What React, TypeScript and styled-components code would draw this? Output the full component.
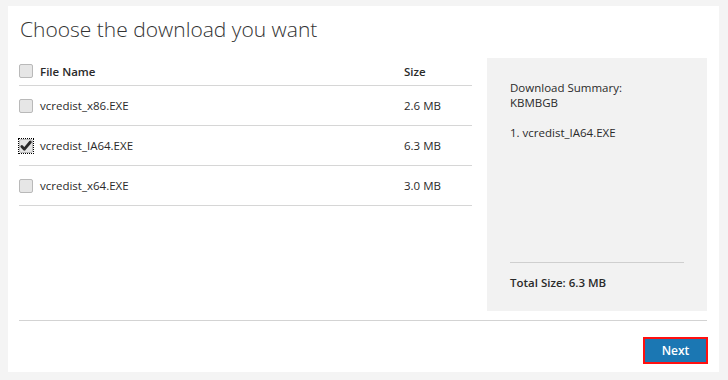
import styled, { createGlobalStyle } from "styled-components";

const files = [
  { name: "vcredist_x86.EXE", size: "2.6 MB", checked: false },
  { name: "vcredist_IA64.EXE", size: "6.3 MB", checked: true },
  { name: "vcredist_x64.EXE", size: "3.0 MB", checked: false },
];

const Check = ({ checked = false, focused = false }) => (
  <CheckFocus $focused={focused}>
    <CheckBox>
      {checked && (
        <svg width="14" height="14" viewBox="0 0 14 14">
          <path
            d="M2.8 7.6 L5.4 10.2 L11.4 3"
            fill="none"
            stroke="#2b2b2b"
            strokeWidth="2.8"
            strokeLinecap="round"
            strokeLinejoin="round"
          />
        </svg>
      )}
    </CheckBox>
  </CheckFocus>
);

const App = () => {
  return (
    <>
      <GlobalStyle />
      <Page>
        <Card>
          <Title>Choose the download you want</Title>
          <Content>
            <Table>
              <HeadRow>
                <NameCell>
                  <Check />
                  <HeadText>File Name</HeadText>
                </NameCell>
                <SizeCell>
                  <HeadText>Size</HeadText>
                </SizeCell>
              </HeadRow>
              {files.map((f) => (
                <Row key={f.name}>
                  <NameCell>
                    <Check checked={f.checked} focused={f.checked} />
                    <span>{f.name}</span>
                  </NameCell>
                  <SizeCell>{f.size}</SizeCell>
                </Row>
              ))}
            </Table>
            <Summary>
              <SummaryText>
                <Line>Download Summary:</Line>
                <Line>KBMBGB</Line>
                <Line $gap>1. vcredist_IA64.EXE</Line>
              </SummaryText>
              <Total>Total Size: 6.3 MB</Total>
            </Summary>
          </Content>
          <Footer>
            <NextButton>Next</NextButton>
          </Footer>
        </Card>
      </Page>
    </>
  );
};

export default App;

const GlobalStyle = createGlobalStyle`
  body {
    margin: 0;
    background: #f4f4f4;
    font-family: "Open Sans", "Noto Sans", sans-serif;
    color: #2a2a2a;
  }
`;

const Page = styled.div`
  padding: 6px 9px 8px 8px;
`;

const Card = styled.div`
  background: #fff;
  height: 366px;
  box-sizing: border-box;
  padding: 0 12px 0 11px;
  display: flex;
  flex-direction: column;
`;

const Title = styled.h1`
  margin: 0;
  padding: 9px 0 0 1px;
  height: 43px;
  box-sizing: border-box;
  font-size: 21px;
  font-weight: 300;
  line-height: 28px;
  color: #333;
`;

const Content = styled.div`
  display: flex;
  gap: 15px;
  align-items: flex-start;
  padding-bottom: 9px;
  border-bottom: 1px solid #d3d3d3;
  margin-top: 8px;
`;

const Table = styled.div`
  width: 453px;
  font-size: 11.5px;
`;

const Row = styled.div`
  display: flex;
  align-items: center;
  height: 39px;
  border-bottom: 1px solid #d6d6d6;
`;

const HeadRow = styled(Row)`
  height: 28px;
`;

const NameCell = styled.div`
  flex: 1;
  display: flex;
  align-items: center;
  gap: 7px;
`;

const SizeCell = styled.div`
  width: 68px;
`;

const HeadText = styled.span`
  font-weight: 600;
`;

const CheckFocus = styled.div<{ $focused: boolean }>`
  padding: 1px;
  outline: ${(p) => (p.$focused ? "1px dotted #000" : "none")};
  outline-offset: -1px;
  margin: -1px;
  display: flex;
`;

const CheckBox = styled.div`
  width: 12px;
  height: 12px;
  border: 1px solid #b9b9b9;
  border-radius: 2px;
  background: #e6e6e6;
  display: flex;
  align-items: center;
  justify-content: center;
  svg {
    flex: none;
  }
`;

const Summary = styled.div`
  width: 220px;
  height: 253px;
  margin-top: 1px;
  background: #f2f2f2;
  box-sizing: border-box;
  padding: 22px 23px 21px 23px;
  display: flex;
  flex-direction: column;
  justify-content: space-between;
  font-size: 11.5px;
`;

const SummaryText = styled.div``;

const Line = styled.div<{ $gap?: boolean }>`
  height: 15px;
  line-height: 15px;
  margin-top: ${(p) => (p.$gap ? "15px" : "0")};
`;

const Total = styled.div`
  border-top: 1px solid #cfcfcf;
  padding-top: 12px;
  line-height: 15px;
  font-weight: 600;
`;

const Footer = styled.div`
  display: flex;
  justify-content: flex-end;
  padding-top: 16px;
`;

const NextButton = styled.button`
  width: 65px;
  height: 27px;
  box-sizing: border-box;
  border: 2px solid #ff1010;
  background: #1b77b3;
  color: #fff;
  font-family: "Open Sans", sans-serif;
  font-size: 12px;
  font-weight: 600;
  padding: 0;
  margin-right: -1px;
`;
